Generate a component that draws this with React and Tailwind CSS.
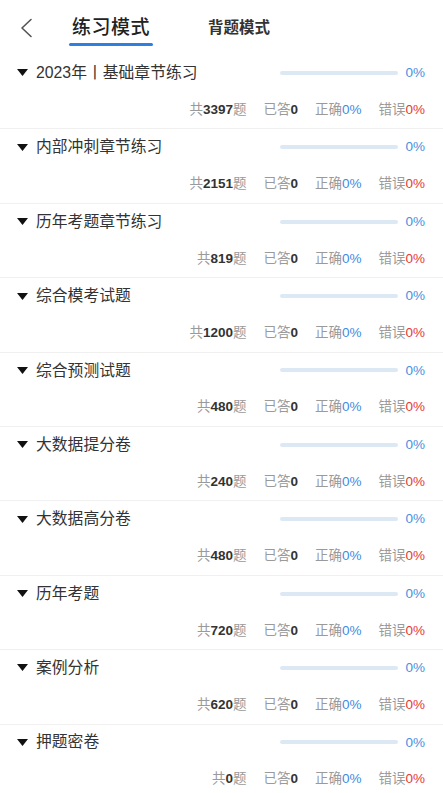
import React from 'react';

const chapters = [
  { title: '2023年丨基础章节练习', total: 3397 },
  { title: '内部冲刺章节练习', total: 2151 },
  { title: '历年考题章节练习', total: 819 },
  { title: '综合模考试题', total: 1200 },
  { title: '综合预测试题', total: 480 },
  { title: '大数据提分卷', total: 240 },
  { title: '大数据高分卷', total: 480 },
  { title: '历年考题', total: 720 },
  { title: '案例分析', total: 620 },
  { title: '押题密卷', total: 0 },
];

const font = { fontFamily: '"Liberation Sans", "Noto Sans CJK SC", sans-serif' };

const ChapterRow = ({ title, total }) => (
  <div className="h-[74.4px] border-b-[1.5px] border-[#f0f0f0] flex flex-col">
    <div className="h-[36px] flex items-center pl-[17px] pr-[18px]">
      <svg width="11" height="7" viewBox="0 0 11 7" className="shrink-0">
        <path d="M0 0h11L5.5 7z" fill="#111" />
      </svg>
      <span className="ml-[8px] text-[15.8px] text-[#333] flex-1 leading-none">{title}</span>
      <div className="w-[118px] h-[4px] rounded-full bg-[#dde8f5]" />
      <span className="ml-[7px] text-[13.5px] text-[#4a8fe0] leading-none">0%</span>
    </div>
    <div className="h-[38px] flex items-center justify-end gap-[17px] pr-[18px] text-[13.5px] text-[#9a9a9a] leading-none">
      <span>
        共<span className="text-[#333] font-bold">{total}</span>题
      </span>
      <span>
        已答<span className="text-[#333] font-bold">0</span>
      </span>
      <span>
        正确<span className="text-[#3d8be4]">0%</span>
      </span>
      <span>
        错误<span className="text-[#e53935]">0%</span>
      </span>
    </div>
  </div>
);

const App = () => {
  return (
    <div className="w-[443px] h-[793px] bg-white overflow-hidden" style={font}>
      {/* Header */}
      <header className="h-[55px] flex items-center relative">
        <svg width="14" height="20" viewBox="0 0 14 20" className="ml-[19px]" fill="none">
          <path d="M12 1.5L3 10l9 8.5" stroke="#555" strokeWidth="1.6" strokeLinecap="round" strokeLinejoin="round" />
        </svg>
        <div className="ml-[39px] relative flex flex-col items-center">
          <span className="text-[19px] font-medium text-[#222] leading-none tracking-[0.5px]">练习模式</span>
          <div className="absolute top-[25px] w-[84px] h-[3px] rounded-full bg-[#2f7fe0]" />
        </div>
        <span className="ml-[58px] text-[15.5px] font-semibold text-[#333] leading-none">背题模式</span>
      </header>

      {/* Chapters */}
      <div>
        {chapters.map((c) => (
          <ChapterRow key={c.title} title={c.title} total={c.total} />
        ))}
      </div>
    </div>
  );
};

export default App;
